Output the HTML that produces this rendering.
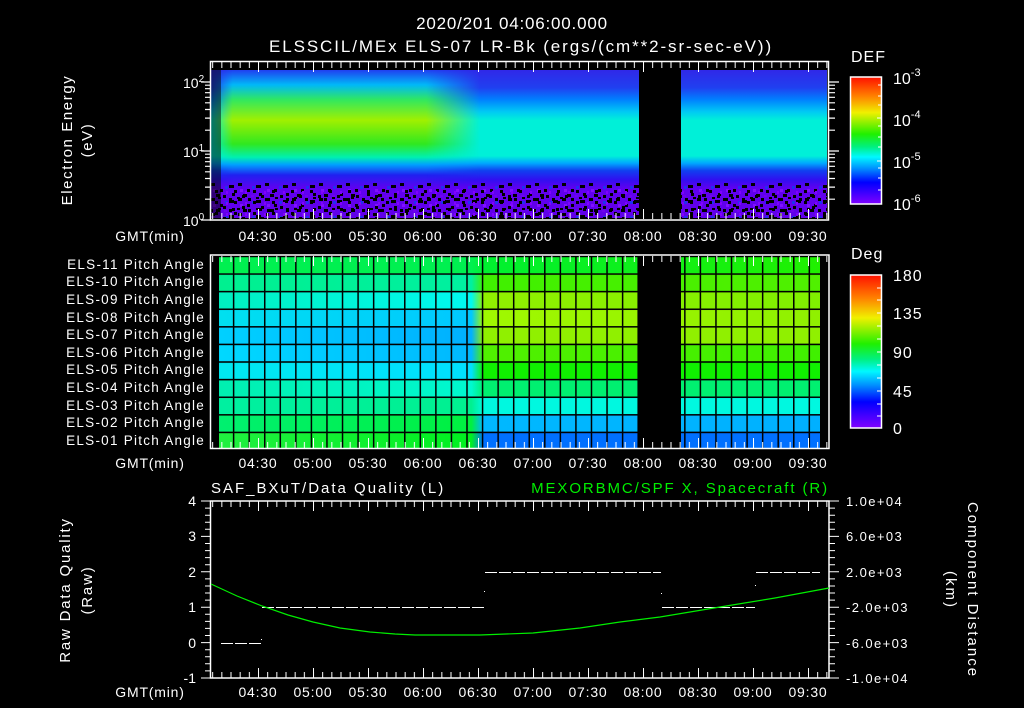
<!DOCTYPE html>
<html><head><meta charset="utf-8"><style>
html,body{margin:0;padding:0;background:#000;}
svg{display:block}
text{font-family:"Liberation Sans",sans-serif;fill:#fff}
</style></head><body>
<svg width="1024" height="708" viewBox="0 0 1024 708" xmlns="http://www.w3.org/2000/svg">
<defs>
<linearGradient id="cb" x1="0" y1="0" x2="0" y2="1">
<stop offset="0" stop-color="#ff1000"/><stop offset="0.15" stop-color="#ff8000"/><stop offset="0.28" stop-color="#f0f000"/><stop offset="0.45" stop-color="#20f000"/><stop offset="0.55" stop-color="#00f080"/><stop offset="0.63" stop-color="#00f8ff"/><stop offset="0.72" stop-color="#0090ff"/><stop offset="0.83" stop-color="#0000ff"/><stop offset="1" stop-color="#8000ff"/>
</linearGradient>
<linearGradient id="sB" gradientUnits="userSpaceOnUse" x1="0" y1="70" x2="0" y2="218">
<stop offset="0" stop-color="#3028e8"/><stop offset="0.12" stop-color="#2040f0"/><stop offset="0.2" stop-color="#0080ff"/><stop offset="0.28" stop-color="#00c8f4"/><stop offset="0.34" stop-color="#00f0d8"/><stop offset="0.58" stop-color="#00f0d8"/><stop offset="0.63" stop-color="#00a8ff"/><stop offset="0.68" stop-color="#1040f0"/><stop offset="0.74" stop-color="#3010f0"/><stop offset="0.8" stop-color="#6000f0"/><stop offset="1" stop-color="#6000e8"/>
</linearGradient>
<linearGradient id="sA" gradientUnits="userSpaceOnUse" x1="0" y1="70" x2="0" y2="218">
<stop offset="0" stop-color="#2040f0"/><stop offset="0.1" stop-color="#00b8f8"/><stop offset="0.2" stop-color="#30e860"/><stop offset="0.34" stop-color="#a0f000"/><stop offset="0.5" stop-color="#30e820"/><stop offset="0.59" stop-color="#00f0b0"/><stop offset="0.64" stop-color="#00a0ff"/><stop offset="0.71" stop-color="#2020f0"/><stop offset="0.8" stop-color="#6000f0"/><stop offset="1" stop-color="#6000e8"/>
</linearGradient>
<linearGradient id="mA" gradientUnits="userSpaceOnUse" x1="211" y1="0" x2="480" y2="0">
<stop offset="0" stop-color="#fff" stop-opacity="0"/><stop offset="0.08" stop-color="#fff" stop-opacity="1"/><stop offset="0.8" stop-color="#fff" stop-opacity="1"/><stop offset="1" stop-color="#fff" stop-opacity="0"/>
</linearGradient>
<mask id="mkA"><rect x="211" y="60" width="270" height="160" fill="url(#mA)"/></mask>
<pattern id="spk" patternUnits="userSpaceOnUse" x="211" y="183" width="27" height="15">
<rect x="0" y="0" width="4" height="3" fill="#000"/><rect x="9" y="6" width="3" height="3" fill="#000"/><rect x="18" y="2" width="5" height="3" fill="#000"/><rect x="5" y="11" width="4" height="3" fill="#000"/><rect x="21" y="10" width="3" height="3" fill="#000"/><rect x="13" y="12" width="3" height="2" fill="#7000f0"/><rect x="2" y="6" width="3" height="3" fill="#8010ff"/><rect x="14" y="3" width="3" height="3" fill="#2030f0"/>
</pattern>
<pattern id="spk2" patternUnits="userSpaceOnUse" x="215" y="190" width="19" height="11">
<rect x="0" y="0" width="3" height="3" fill="#000"/><rect x="8" y="5" width="3" height="3" fill="#000"/><rect x="14" y="8" width="3" height="3" fill="#000"/><rect x="11" y="1" width="2" height="3" fill="#8000ff"/><rect x="3" y="7" width="3" height="2" fill="#000"/>
</pattern>
<pattern id="minT" patternUnits="userSpaceOnUse" x="212.17" y="0" width="9.1667" height="708"><rect x="0" y="0" width="1" height="708" fill="#fff"/></pattern>
<pattern id="majT" patternUnits="userSpaceOnUse" x="203" y="0" width="55" height="708"><rect x="0" y="0" width="1" height="708" fill="#fff"/></pattern>
<pattern id="vg" patternUnits="userSpaceOnUse" x="217.3" y="0" width="15.56" height="708"><rect x="0" y="0" width="1.5" height="708" fill="#000"/></pattern>
<pattern id="hg" patternUnits="userSpaceOnUse" x="0" y="255.7" width="1024" height="17.6"><rect x="0" y="0" width="1024" height="1.5" fill="#000"/></pattern>
</defs>

<text x="512" y="29" font-size="17" text-anchor="middle" letter-spacing="0.8">2020/201 04:06:00.000</text>
<text x="521" y="52" font-size="17" text-anchor="middle" letter-spacing="1.9">ELSSCIL/MEx ELS-07 LR-Bk  (ergs/(cm**2-sr-sec-eV))</text>

<rect x="211" y="70" width="616" height="148" fill="url(#sB)"/>
<rect x="211" y="70" width="270" height="148" fill="url(#sA)" mask="url(#mkA)"/>
<rect x="211" y="183" width="616" height="35" fill="url(#spk)"/>
<rect x="211" y="190" width="616" height="28" fill="url(#spk2)"/>
<rect x="211" y="70" width="10" height="148" fill="#000" opacity="0.5"/>
<rect x="639" y="63" width="42" height="157" fill="#000"/>
<rect x="827" y="63" width="2" height="157" fill="#000"/>
<rect x="210.5" y="61.5" width="618" height="158.5" fill="none" stroke="#fff" stroke-width="1.5"/>
<rect x="211" y="62" width="618" height="6" fill="url(#minT)"/>
<rect x="211" y="62" width="618" height="10" fill="url(#majT)"/>
<rect x="211" y="213" width="618" height="6" fill="url(#minT)"/>
<rect x="211" y="209" width="618" height="10" fill="url(#majT)"/>
<path stroke="#fff" stroke-width="1.2" d="M201 82H211M201 151H211M201 220H211M205 199.2H211M205 187.1H211M205 178.5H211M205 171.8H211M205 166.3H211M205 161.7H211M205 157.7H211M205 154.2H211M205 130.2H211M205 118.1H211M205 109.5H211M205 102.8H211M205 97.3H211M205 92.7H211M205 88.7H211M205 85.2H211M829 82H839M829 151H839M829 199.2H835M829 187.1H835M829 178.5H835M829 171.8H835M829 166.3H835M829 161.7H835M829 157.7H835M829 154.2H835M829 130.2H835M829 118.1H835M829 109.5H835M829 102.8H835M829 97.3H835M829 92.7H835M829 88.7H835M829 85.2H835"/>
<text x="183" y="88" font-size="14">10<tspan dy="-6" font-size="10">2</tspan></text>
<text x="183" y="157" font-size="14">10<tspan dy="-6" font-size="10">1</tspan></text>
<text x="183" y="226" font-size="14">10<tspan dy="-6" font-size="10">0</tspan></text>
<text transform="translate(72,140) rotate(-90)" font-size="15" text-anchor="middle" letter-spacing="1.6">Electron Energy</text>
<text transform="translate(92,140) rotate(-90)" font-size="15" text-anchor="middle" letter-spacing="1.6">(eV)</text>
<g font-size="14" text-anchor="middle" letter-spacing="0.8">
<text x="150" y="241">GMT(min)</text>
<text x="258" y="241">04:30</text><text x="313" y="241">05:00</text><text x="368" y="241">05:30</text><text x="423" y="241">06:00</text><text x="478" y="241">06:30</text><text x="533" y="241">07:00</text><text x="588" y="241">07:30</text><text x="643" y="241">08:00</text><text x="698" y="241">08:30</text><text x="753" y="241">09:00</text><text x="808" y="241">09:30</text>
</g>
<text x="851" y="62" font-size="16" letter-spacing="1">DEF</text>
<rect x="850.5" y="77" width="31" height="127" fill="url(#cb)" stroke="#fff" stroke-width="1.5"/>
<path stroke="#fff" stroke-width="1" d="M877 77H882M877 118H882M877 161H882M877 204H882M878 85H882M878 96H882M878 105H882M878 126H882M878 137H882M878 147H882M878 168H882M878 178H882M878 190H882"/>
<text x="893" y="84" font-size="16">10<tspan dy="-8" font-size="11">-3</tspan></text>
<text x="893" y="126" font-size="16">10<tspan dy="-8" font-size="11">-4</tspan></text>
<text x="893" y="168" font-size="16">10<tspan dy="-8" font-size="11">-5</tspan></text>
<text x="893" y="210" font-size="16">10<tspan dy="-8" font-size="11">-6</tspan></text>

<g>
<defs>
<linearGradient id="r11" gradientUnits="userSpaceOnUse" x1="219" x2="820" y1="0" y2="0"><stop offset="0" stop-color="#00f050"/><stop offset="0.42" stop-color="#00f050"/><stop offset="0.44" stop-color="#00f030"/><stop offset="1" stop-color="#20f000"/></linearGradient>
<linearGradient id="r10" gradientUnits="userSpaceOnUse" x1="219" x2="820" y1="0" y2="0"><stop offset="0" stop-color="#00f090"/><stop offset="0.42" stop-color="#00f0a0"/><stop offset="0.44" stop-color="#40f000"/><stop offset="1" stop-color="#50f000"/></linearGradient>
<linearGradient id="r9" gradientUnits="userSpaceOnUse" x1="219" x2="820" y1="0" y2="0"><stop offset="0" stop-color="#00f0c0"/><stop offset="0.42" stop-color="#00f8f0"/><stop offset="0.44" stop-color="#90f000"/><stop offset="1" stop-color="#80f000"/></linearGradient>
<linearGradient id="r8" gradientUnits="userSpaceOnUse" x1="219" x2="820" y1="0" y2="0"><stop offset="0" stop-color="#00e0f0"/><stop offset="0.42" stop-color="#00c8ff"/><stop offset="0.44" stop-color="#a0f800"/><stop offset="1" stop-color="#90f000"/></linearGradient>
<linearGradient id="r7" gradientUnits="userSpaceOnUse" x1="219" x2="820" y1="0" y2="0"><stop offset="0" stop-color="#00d0ff"/><stop offset="0.42" stop-color="#00b0ff"/><stop offset="0.44" stop-color="#90f000"/><stop offset="1" stop-color="#90f000"/></linearGradient>
<linearGradient id="r6" gradientUnits="userSpaceOnUse" x1="219" x2="820" y1="0" y2="0"><stop offset="0" stop-color="#00d8ff"/><stop offset="0.42" stop-color="#00b8ff"/><stop offset="0.44" stop-color="#50f000"/><stop offset="1" stop-color="#40f000"/></linearGradient>
<linearGradient id="r5" gradientUnits="userSpaceOnUse" x1="219" x2="820" y1="0" y2="0"><stop offset="0" stop-color="#00e8f0"/><stop offset="0.42" stop-color="#00e0ff"/><stop offset="0.44" stop-color="#10f000"/><stop offset="1" stop-color="#10f000"/></linearGradient>
<linearGradient id="r4" gradientUnits="userSpaceOnUse" x1="219" x2="820" y1="0" y2="0"><stop offset="0" stop-color="#00f0b0"/><stop offset="0.42" stop-color="#00f8d0"/><stop offset="0.44" stop-color="#00f070"/><stop offset="1" stop-color="#00f070"/></linearGradient>
<linearGradient id="r3" gradientUnits="userSpaceOnUse" x1="219" x2="820" y1="0" y2="0"><stop offset="0" stop-color="#00f0a0"/><stop offset="0.42" stop-color="#00f090"/><stop offset="0.44" stop-color="#00f8e0"/><stop offset="1" stop-color="#00f8e0"/></linearGradient>
<linearGradient id="r2" gradientUnits="userSpaceOnUse" x1="219" x2="820" y1="0" y2="0"><stop offset="0" stop-color="#00f070"/><stop offset="0.42" stop-color="#00f040"/><stop offset="0.44" stop-color="#00b8ff"/><stop offset="1" stop-color="#00b0ff"/></linearGradient>
<linearGradient id="r1" gradientUnits="userSpaceOnUse" x1="219" x2="820" y1="0" y2="0"><stop offset="0" stop-color="#20f040"/><stop offset="0.42" stop-color="#00f020"/><stop offset="0.44" stop-color="#0070ff"/><stop offset="1" stop-color="#0070ff"/></linearGradient>
</defs>
<rect x="219" y="256" width="601" height="17.6" fill="url(#r11)"/>
<rect x="219" y="273.3" width="601" height="17.6" fill="url(#r10)"/>
<rect x="219" y="290.9" width="601" height="17.6" fill="url(#r9)"/>
<rect x="219" y="308.5" width="601" height="17.6" fill="url(#r8)"/>
<rect x="219" y="326.1" width="601" height="17.6" fill="url(#r7)"/>
<rect x="219" y="343.7" width="601" height="17.6" fill="url(#r6)"/>
<rect x="219" y="361.3" width="601" height="17.6" fill="url(#r5)"/>
<rect x="219" y="378.9" width="601" height="17.6" fill="url(#r4)"/>
<rect x="219" y="396.5" width="601" height="17.6" fill="url(#r3)"/>
<rect x="219" y="414.1" width="601" height="17.6" fill="url(#r2)"/>
<rect x="219" y="431.7" width="601" height="17" fill="url(#r1)"/>
<rect x="219" y="256" width="601" height="193" fill="url(#vg)"/>
<rect x="219" y="256" width="601" height="193" fill="url(#hg)"/>
<rect x="638" y="256" width="43" height="193" fill="#000"/>
</g>
<rect x="210.5" y="255" width="618.5" height="193.5" fill="none" stroke="#fff" stroke-width="1.5"/>
<rect x="211" y="256" width="618" height="6" fill="url(#minT)"/>
<rect x="211" y="256" width="618" height="10" fill="url(#majT)"/>
<rect x="211" y="442" width="618" height="6" fill="url(#minT)"/>
<rect x="211" y="438" width="618" height="10" fill="url(#majT)"/>
<g font-size="13.5" text-anchor="end" letter-spacing="1.25">
<text x="205" y="269">ELS-11 Pitch Angle</text>
<text x="205" y="286">ELS-10 Pitch Angle</text>
<text x="205" y="304">ELS-09 Pitch Angle</text>
<text x="205" y="322">ELS-08 Pitch Angle</text>
<text x="205" y="339">ELS-07 Pitch Angle</text>
<text x="205" y="357">ELS-06 Pitch Angle</text>
<text x="205" y="374">ELS-05 Pitch Angle</text>
<text x="205" y="392">ELS-04 Pitch Angle</text>
<text x="205" y="410">ELS-03 Pitch Angle</text>
<text x="205" y="427">ELS-02 Pitch Angle</text>
<text x="205" y="445">ELS-01 Pitch Angle</text>
</g>
<g font-size="14" text-anchor="middle" letter-spacing="0.8">
<text x="150" y="468">GMT(min)</text>
<text x="258" y="468">04:30</text><text x="313" y="468">05:00</text><text x="368" y="468">05:30</text><text x="423" y="468">06:00</text><text x="478" y="468">06:30</text><text x="533" y="468">07:00</text><text x="588" y="468">07:30</text><text x="643" y="468">08:00</text><text x="698" y="468">08:30</text><text x="753" y="468">09:00</text><text x="808" y="468">09:30</text>
</g>
<text x="851" y="259" font-size="16" letter-spacing="1">Deg</text>
<rect x="850.5" y="275" width="31" height="153" fill="url(#cb)" stroke="#fff" stroke-width="1.5"/>
<path stroke="#fff" stroke-width="1" d="M877 288H882M877 300H882M877 313H882M877 326H882M877 339H882M877 352H882M877 365H882M877 378H882M877 391H882M877 404H882M877 416H882"/>
<g font-size="16" letter-spacing="1">
<text x="893" y="281">180</text><text x="893" y="319">135</text><text x="893" y="358">90</text><text x="893" y="397">45</text><text x="893" y="434">0</text>
</g>

<text x="211" y="493" font-size="15" letter-spacing="2">SAF_BXuT/Data Quality (L)</text>
<text x="829" y="493" font-size="15" text-anchor="end" letter-spacing="1.9" style="fill:#00ee00">MEXORBMC/SPF X, Spacecraft (R)</text>
<rect x="210.5" y="501" width="618.5" height="177" fill="none" stroke="#fff" stroke-width="1.5"/>
<rect x="211" y="501" width="618" height="6" fill="url(#minT)"/>
<rect x="211" y="501" width="618" height="10" fill="url(#majT)"/>
<rect x="211" y="672" width="618" height="6" fill="url(#minT)"/>
<rect x="211" y="668" width="618" height="10" fill="url(#majT)"/>
<path stroke="#fff" stroke-width="1" d="M201 501H211M201 536.4H211M201 571.8H211M201 607.2H211M201 642.6H211M201 678H211M205 508.1H211M205 515.2H211M205 522.2H211M205 529.3H211M205 543.5H211M205 550.6H211M205 557.6H211M205 564.7H211M205 578.9H211M205 586H211M205 593H211M205 600.1H211M205 614.3H211M205 621.4H211M205 628.4H211M205 635.5H211M205 649.7H211M205 656.8H211M205 663.8H211M205 670.9H211M829 501H839M829 536.4H839M829 571.8H839M829 607.2H839M829 642.6H839M829 678H839M829 508.1H835M829 515.2H835M829 522.2H835M829 529.3H835M829 543.5H835M829 550.6H835M829 557.6H835M829 564.7H835M829 578.9H835M829 586H835M829 593H835M829 600.1H835M829 614.3H835M829 621.4H835M829 628.4H835M829 635.5H835M829 649.7H835M829 656.8H835M829 663.8H835M829 670.9H835"/>
<g stroke="#fff" stroke-width="1" stroke-dasharray="12 2" fill="none">
<path d="M221 643.5H261"/><path d="M262 607.5H484"/><path d="M485 572.5H661"/><path d="M662 607.5H755"/><path d="M756 572.5H820"/>
</g>
<rect x="484" y="591" width="1" height="1" fill="#fff"/><rect x="661" y="593" width="1" height="1" fill="#fff"/><rect x="755" y="585" width="1" height="1" fill="#fff"/><rect x="261" y="639" width="1" height="1" fill="#fff"/>
<path fill="none" stroke="#00ee00" stroke-width="1.2" d="M211 584 L237 596 L262 606 L288 615 L313 622 L340 628 L370 632 L395 634 L415 635 L480 635 L533 633 L580 628 L620 622 L660 617 L720 607 L775 598 L829 588"/>
<g font-size="14" text-anchor="end">
<text x="196" y="506">4</text><text x="196" y="541">3</text><text x="196" y="577">2</text><text x="196" y="612">1</text><text x="196" y="648">0</text><text x="196" y="683">-1</text>
</g>
<g font-size="13" letter-spacing="1.4">
<text x="846" y="506">1.0e+04</text><text x="846" y="541">6.0e+03</text><text x="846" y="577">2.0e+03</text><text x="846" y="612">-2.0e+03</text><text x="846" y="648">-6.0e+03</text><text x="846" y="683">-1.0e+04</text>
</g>
<text transform="translate(70,590) rotate(-90)" font-size="15" text-anchor="middle" letter-spacing="1.8">Raw Data Quality</text>
<text transform="translate(92,590) rotate(-90)" font-size="15" text-anchor="middle" letter-spacing="1.8">(Raw)</text>
<text transform="translate(968,590) rotate(90)" font-size="15" text-anchor="middle" letter-spacing="2">Component Distance</text>
<text transform="translate(946,590) rotate(90)" font-size="15" text-anchor="middle" letter-spacing="2">(km)</text>
<g font-size="14" text-anchor="middle" letter-spacing="0.8">
<text x="150" y="697">GMT(min)</text>
<text x="258" y="697">04:30</text><text x="313" y="697">05:00</text><text x="368" y="697">05:30</text><text x="423" y="697">06:00</text><text x="478" y="697">06:30</text><text x="533" y="697">07:00</text><text x="588" y="697">07:30</text><text x="643" y="697">08:00</text><text x="698" y="697">08:30</text><text x="753" y="697">09:00</text><text x="808" y="697">09:30</text>
</g>
</svg>
</body></html>
